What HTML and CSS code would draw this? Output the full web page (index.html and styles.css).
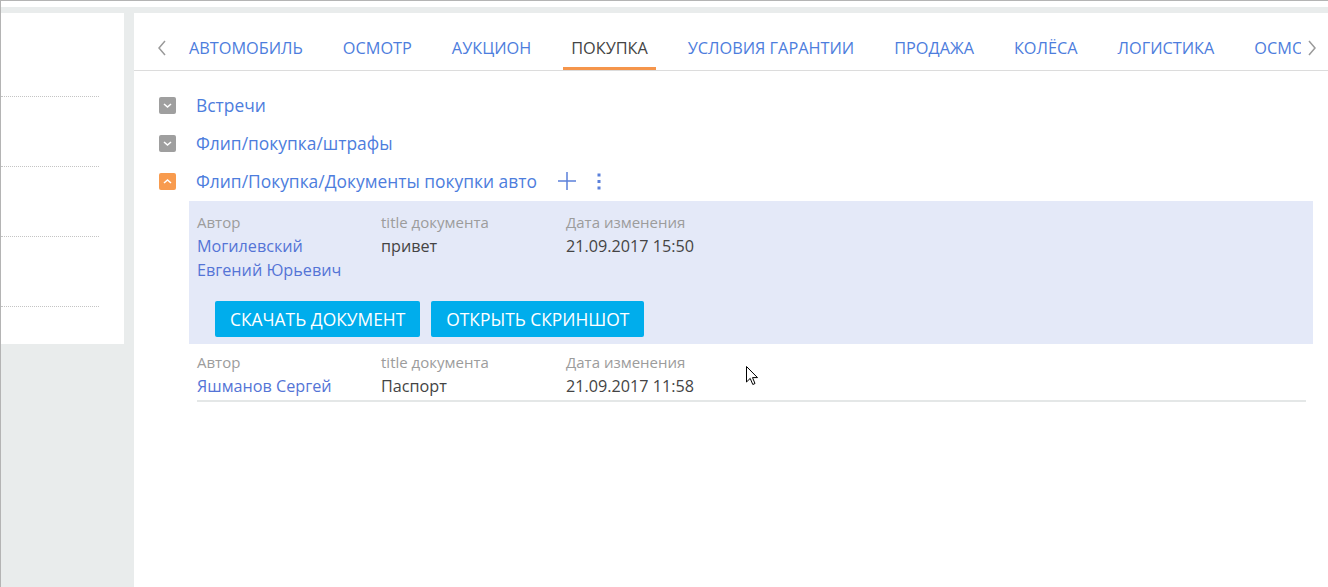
FILE: index.html
```html
<!DOCTYPE html>
<html lang="ru">
<head>
<meta charset="utf-8">
<link rel="stylesheet" href="styles.css">
</head>
<body>
<div class="page">
  <div class="shell">
    <aside class="left">
      <div class="left-row"></div>
      <div class="left-row"></div>
      <div class="left-row"></div>
      <div class="left-row"></div>
    </aside>
    <main class="right">
      <nav class="tabbar">
        <div class="arrow arrow-left">
          <svg width="10" height="16" viewBox="0 0 10 16"><path d="M8 1 L2 8 L8 15" fill="none" stroke="#9a9a9a" stroke-width="1.5"/></svg>
        </div>
        <div class="tabs">
          <div class="tab">АВТОМОБИЛЬ</div>
          <div class="tab">ОСМОТР</div>
          <div class="tab">АУКЦИОН</div>
          <div class="tab active">ПОКУПКА</div>
          <div class="tab">УСЛОВИЯ ГАРАНТИИ</div>
          <div class="tab">ПРОДАЖА</div>
          <div class="tab">КОЛЁСА</div>
          <div class="tab">ЛОГИСТИКА</div>
          <div class="tab">ОСМОТР ДЛЯ ПРОДАЖИ</div>
        </div>
        <div class="arrow arrow-right">
          <svg width="10" height="16" viewBox="0 0 10 16"><path d="M2 1 L8 8 L2 15" fill="none" stroke="#9a9a9a" stroke-width="1.5"/></svg>
        </div>
      </nav>

      <section class="content">
        <div class="group">
          <span class="toggle gray"><svg width="17" height="17" viewBox="0 0 17 17"><path d="M5 7 L8.5 10 L12 7" fill="none" stroke="#fff" stroke-width="1.6"/></svg></span>
          <span class="group-title">Встречи</span>
        </div>
        <div class="group">
          <span class="toggle gray"><svg width="17" height="17" viewBox="0 0 17 17"><path d="M5 7 L8.5 10 L12 7" fill="none" stroke="#fff" stroke-width="1.6"/></svg></span>
          <span class="group-title">Флип/покупка/штрафы</span>
        </div>
        <div class="group">
          <span class="toggle orange"><svg width="17" height="17" viewBox="0 0 17 17"><path d="M5 10 L8.5 7 L12 10" fill="none" stroke="#fff" stroke-width="1.6"/></svg></span>
          <span class="group-title">Флип/Покупка/Документы покупки авто</span>
          <span class="tool plus"><svg width="18" height="18" viewBox="0 0 18 18"><path d="M9 0 V18 M0 9 H18" stroke="#5b80da" stroke-width="1.5"/></svg></span>
          <span class="tool kebab"><svg width="4" height="17" viewBox="0 0 4 17"><rect x="0.5" y="0.5" width="3" height="3" fill="#5b80da"/><rect x="0.5" y="7" width="3" height="3" fill="#5b80da"/><rect x="0.5" y="13.5" width="3" height="3" fill="#5b80da"/></svg></span>
        </div>

        <div class="record selected">
          <div class="fields">
            <div class="field">
              <div class="label">Автор</div>
              <div class="value link">Могилевский<br>Евгений Юрьевич</div>
            </div>
            <div class="field">
              <div class="label">title документа</div>
              <div class="value">привет</div>
            </div>
            <div class="field">
              <div class="label">Дата изменения</div>
              <div class="value">21.09.2017 15:50</div>
            </div>
          </div>
          <div class="actions">
            <button class="btn">СКАЧАТЬ ДОКУМЕНТ</button>
            <button class="btn">ОТКРЫТЬ СКРИНШОТ</button>
          </div>
        </div>

        <div class="record plain">
          <div class="fields">
            <div class="field">
              <div class="label">Автор</div>
              <div class="value link">Яшманов Сергей</div>
            </div>
            <div class="field">
              <div class="label">title документа</div>
              <div class="value">Паспорт</div>
            </div>
            <div class="field">
              <div class="label">Дата изменения</div>
              <div class="value">21.09.2017 11:58</div>
            </div>
          </div>
        </div>
      </section>
    </main>
  </div>
  <svg class="cursor" width="13" height="20" viewBox="0 0 13 20"><path d="M0.5 0.5 V16 L4.2 12.4 L6.8 18.5 L9 17.5 L6.5 11.6 L11.5 11.6 Z" fill="#fff" stroke="#000" stroke-width="1"/></svg>
</div>
</body>
</html>
```

FILE: styles.css
```css
* { box-sizing: border-box; }
html, body { margin: 0; padding: 0; }
body {
  font-family: "Open Sans", "Noto Sans", sans-serif;
  background: #fff;
  color: #444;
}
.page {
  position: relative;
  width: 1328px;
  height: 587px;
  border-top: 1px solid #b4b4b4;
  border-left: 1px solid #b4b4b4;
  padding-top: 6px;
  overflow: hidden;
  background: #fff;
}
.shell {
  display: flex;
  align-items: flex-start;
  gap: 10px;
  height: 580px;
  padding-top: 6px;
  background: #e9ecec;
}
.left {
  width: 123px;
  height: 331px;
  background: #fff;
  padding-top: 14px;
}
.left-row {
  height: 70px;
  margin-right: 25px;
  border-bottom: 1px dotted #c4c4c4;
}
.right {
  flex: 1;
  height: 100%;
  background: #fff;
  min-width: 0;
}
.tabbar {
  display: flex;
  height: 58px;
  border-bottom: 1px solid #dcdcdc;
}
.arrow {
  display: flex;
  align-items: center;
  padding-top: 12px;
}
.arrow-left { width: 47px; padding-left: 23px; }
.arrow-right { width: 27px; padding-left: 6px; }
.tabs {
  display: flex;
  gap: 24px;
  flex: 1;
  overflow: hidden;
  min-width: 0;
}
.tab {
  flex: none;
  height: 57px;
  padding: 25px 8px 0;
  font-size: 16.3px;
  line-height: 20px;
  color: #4d7ddd;
  border-bottom: 3px solid transparent;
  white-space: nowrap;
}
.tab.active {
  color: #444;
  border-bottom-color: #f5954b;
}
.content {
  padding: 15px 15px 0 25px;
}
.group {
  display: flex;
  align-items: center;
  height: 38px;
}
.toggle {
  width: 17px;
  height: 17px;
  border-radius: 2px;
  display: flex;
  flex: none;
}
.toggle.gray { background: #9f9f9f; }
.toggle.orange { background: #f89b4e; }
.group-title {
  margin-left: 20px;
  font-size: 17.4px;
  color: #4d7ddd;
}
.tool { display: flex; }
.plus { margin-left: 21px; }
.kebab { margin-left: 21px; }
.record { margin-left: 30px; }
.record.selected {
  margin-top: 1px;
  background: #e4e9f8;
  padding: 9px 8px 7px;
}
.record.plain {
  margin-left: 38px;
  margin-right: 7px;
  padding-top: 6px;
  padding-bottom: 2px;
  border-bottom: 2px solid #e4e7e7;
}
.fields {
  display: grid;
  grid-template-columns: 184px 185px auto;
}
.label {
  font-size: 15px;
  line-height: 24px;
  color: #9c9c9c;
}
.value {
  font-size: 16.2px;
  line-height: 24px;
  color: #444;
}
.value.link { color: #5474d6; }
.actions {
  display: flex;
  gap: 11px;
  margin-top: 19px;
  padding-left: 18px;
}
.btn {
  height: 36px;
  border: 0;
  border-radius: 2px;
  background: #00adec;
  color: #fff;
  font-family: "Open Sans", "Noto Sans", sans-serif;
  font-size: 17.4px;
  padding: 0 15px;
  cursor: pointer;
}
.cursor {
  position: absolute;
  left: 745px;
  top: 365px;
}
```
